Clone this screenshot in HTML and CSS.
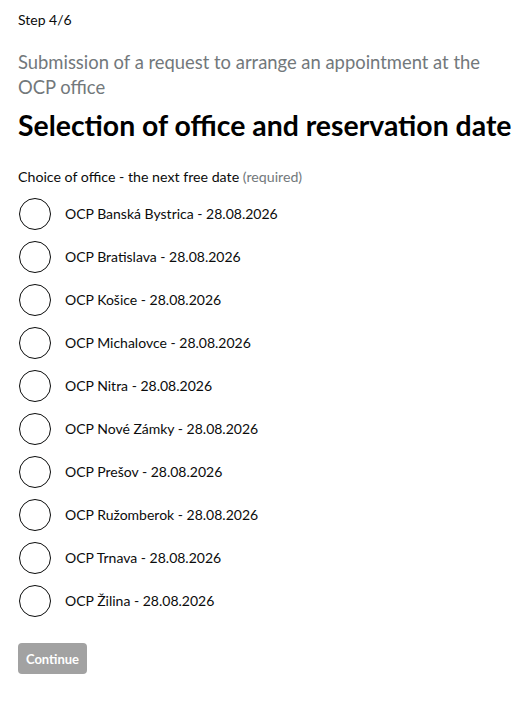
FILE: index.html
```html
<!DOCTYPE html>
<html lang="en">
<head>
<meta charset="utf-8">
<link rel="stylesheet" href="styles.css">
</head>
<body>
<main class="page">
  <p class="step">Step 4/6</p>
  <p class="caption">Submission of a request to arrange an appointment at the OCP office</p>
  <h1 class="title">Selection of office and reservation date</h1>
  <div class="group" role="radiogroup">
    <div class="legend">Choice of office - the next free date <span class="hint">(required)</span></div>
    <div class="options">
      <label class="radio"><span class="circle"></span><span class="text">OCP Banská Bystrica - 28.08.2026</span></label>
      <label class="radio"><span class="circle"></span><span class="text">OCP Bratislava - 28.08.2026</span></label>
      <label class="radio"><span class="circle"></span><span class="text">OCP Košice - 28.08.2026</span></label>
      <label class="radio"><span class="circle"></span><span class="text">OCP Michalovce - 28.08.2026</span></label>
      <label class="radio"><span class="circle"></span><span class="text">OCP Nitra - 28.08.2026</span></label>
      <label class="radio"><span class="circle"></span><span class="text">OCP Nové Zámky - 28.08.2026</span></label>
      <label class="radio"><span class="circle"></span><span class="text">OCP Prešov - 28.08.2026</span></label>
      <label class="radio"><span class="circle"></span><span class="text">OCP Ružomberok - 28.08.2026</span></label>
      <label class="radio"><span class="circle"></span><span class="text">OCP Trnava - 28.08.2026</span></label>
      <label class="radio"><span class="circle"></span><span class="text">OCP Žilina - 28.08.2026</span></label>
    </div>
  </div>
  <button class="btn" type="button">Continue</button>
</main>
</body>
</html>
```
FILE: styles.css
```css
html, body {
  margin: 0;
  padding: 0;
  background: #fff;
}
body {
  font-family: Lato, "Liberation Sans", sans-serif;
  color: #0b0c0c;
}
.page {
  padding: 10px 8px 0 18px;
}
.step {
  margin: 0;
  font-size: 14px;
  line-height: 20px;
}
.caption {
  margin: 20px 10px 0 0;
  font-size: 18.4px;
  line-height: 25px;
  color: #72787b;
}
.title {
  margin: 5px 0 0 0;
  font-size: 28.4px;
  line-height: 40px;
  font-weight: 700;
  color: #000;
  white-space: nowrap;
}
.group {
  margin-top: 22px;
}
.legend {
  font-size: 14.2px;
  line-height: 20px;
}
.hint {
  color: #72787b;
}
.options {
  margin-top: 11px;
  display: flex;
  flex-direction: column;
  gap: 11px;
}
.radio {
  display: flex;
  align-items: center;
  gap: 14px;
  font-size: 14px;
  line-height: 20px;
}
.circle {
  width: 30px;
  height: 30px;
  border: 1.5px solid #0b0c0c;
  border-radius: 50%;
  flex: none;
  margin-left: 1px;
}
.btn {
  margin-top: 26px;
  display: block;
  border: 0;
  border-radius: 4px;
  background: #a2a2a2;
  color: #fff;
  font-family: inherit;
  font-weight: 700;
  font-size: 13px;
  width: 69px;
  height: 31px;
  padding: 0;
}
```
